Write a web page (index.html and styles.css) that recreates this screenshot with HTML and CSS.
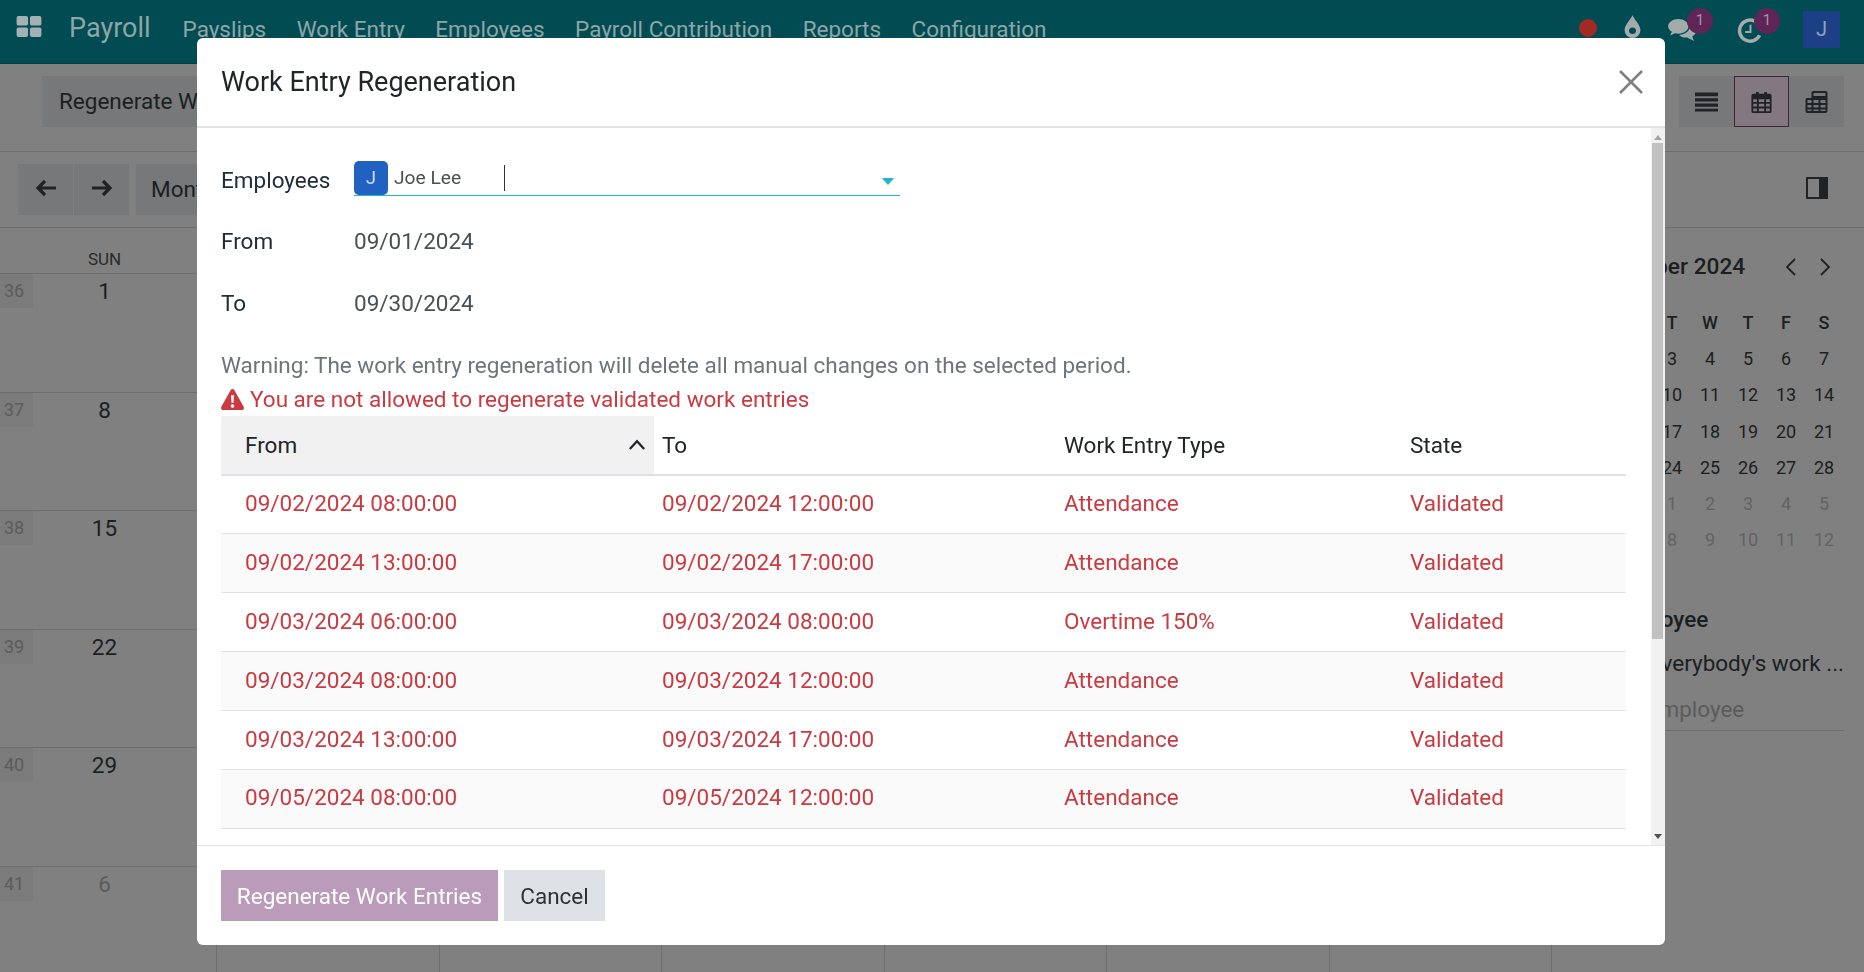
FILE: index.html
```html
<!DOCTYPE html>
<html lang="en">
<head>
  <meta charset="UTF-8">
  <title>Work Entry Regeneration</title>
  <link rel="stylesheet" href="styles.css">
</head>
<body>
  <header class="navbar">
    <svg class="apps-icon" viewBox="0 0 26 22"><rect width="12" height="10" rx="2"/><rect x="14" width="12" height="10" rx="2"/><rect y="12" width="12" height="10" rx="2"/><rect x="14" y="12" width="12" height="10" rx="2"/></svg>
    <span class="brand">Payroll</span>
    <nav class="menu">
      <a>Payslips</a>
      <a>Work Entry</a>
      <a>Employees</a>
      <a>Payroll Contribution</a>
      <a>Reports</a>
      <a>Configuration</a>
    </nav>
    <div class="systray">
      <span class="red-dot"></span>
      <svg class="tray-drop" viewBox="0 0 18 26"><path fill-rule="evenodd" d="M9 0c1 4 9 11 9 17a9 9 0 0 1-18 0C0 11 8 4 9 0zM9 14a4 4 0 0 0-4 4c0 2 2 3.500 4 3.500s4-1.500 4-3.500a4 4 0 0 0-4-4z"/></svg>
      <span class="tray-item">
        <svg class="tray-chat" viewBox="0 0 30 26"><path d="M11 1C5 1 0 4.500 0 9c0 2.500 1.500 4.500 4 6l-2 4 5.500-2.500c1.200.3 2.300.5 3.500.5 6 0 11-3.500 11-8s-5-8-11-8z"/><path d="M24 8.500c0 5-5.200 9.500-12 9.800 1.800 2 5 3.200 8.500 2.700L28 25l-2-5c2.500-1.300 4-3.300 4-5.500 0-2.600-2.300-4.800-6-6z"/></svg>
        <span class="badge">1</span>
      </span>
      <span class="tray-item tray-item-clock">
        <svg class="tray-clock" viewBox="0 0 28 26"><path d="M19 3.200A11 11 0 1 0 24 18" fill="none" stroke-width="3.600"/><path d="M14.500 7v7.500H9" fill="none" stroke-width="2"/></svg>
        <span class="badge">1</span>
      </span>
      <span class="avatar">J</span>
    </div>
  </header>

  <section class="control-panel">
    <div class="panel-row">
      <button class="btn-gray btn-regen">Regenerate Work Entries</button>
      <div class="view-switch">
        <span class="view-btn">
          <svg viewBox="0 0 24 20"><path d="M0 0h24v4H0zM0 6h24v3.500H0zM0 11.500h24V15H0zM0 17h24v3H0z"/></svg>
        </span>
        <span class="view-btn view-btn-active">
          <svg viewBox="0 0 22 24"><path fill-rule="evenodd" d="M2 3h3V1h3v2h6V1h3v2h3a2 2 0 0 1 2 2v17a2 2 0 0 1-2 2H2a2 2 0 0 1-2-2V5a2 2 0 0 1 2-2zM2 9v3h4V9zm6 0v3h6V9zm8 0v3h4V9zM2 14v3h4v-3zm6 0v3h6v-3zm8 0v3h4v-3zM2 19v3h4v-3zm6 0v3h6v-3zm8 0v3h4v-3z"/></svg>
        </span>
        <span class="view-btn">
          <svg viewBox="0 0 22 22"><path fill-rule="evenodd" d="M8 0h12a2 2 0 0 1 2 2v18a2 2 0 0 1-2 2H2a2 2 0 0 1-2-2V9a2 2 0 0 1 2-2h4V2a2 2 0 0 1 2-2zm0 2v3h12V2zM2 9v3h4V9zm6 0v3h5V9zm7 0v3h5V9zM2 14v2.500h4V14zm6 0v2.500h5V14zm7 0v2.500h5V14zM2 18.500V20h4v-1.500zm6 0V20h5v-1.500zm7 0V20h5v-1.500z"/></svg>
        </span>
      </div>
    </div>
    <div class="panel-row panel-row-second">
      <div class="nav-buttons">
        <button class="btn-gray btn-arrow">
          <svg viewBox="0 0 20 18"><path d="M9 2L2 9l7 7M2 9h18" fill="none" stroke-width="3.200"/></svg>
        </button>
        <button class="btn-gray btn-arrow">
          <svg viewBox="0 0 20 18"><path d="M11 2l7 7-7 7M18 9H0" fill="none" stroke-width="3.200"/></svg>
        </button>
        <button class="btn-gray btn-month">Month</button>
      </div>
      <svg class="side-toggle" viewBox="0 0 22 22"><path fill-rule="evenodd" d="M0 0h22v22H0zM2 2v18h11V2z"/></svg>
    </div>
  </section>

  <main class="content">
    <div class="calendar">
      <div class="cal-head">SUN</div><div></div><div></div><div></div><div></div><div></div><div></div>

      <div class="cal-day"><span class="week-no">36</span>1</div><div class="cal-cell"></div><div class="cal-cell"></div><div class="cal-cell"></div><div class="cal-cell"></div><div class="cal-cell"></div><div class="cal-cell"></div>
      <div class="cal-day"><span class="week-no">37</span>8</div><div class="cal-cell"></div><div class="cal-cell"></div><div class="cal-cell"></div><div class="cal-cell"></div><div class="cal-cell"></div><div class="cal-cell"></div>
      <div class="cal-day"><span class="week-no">38</span>15</div><div class="cal-cell"></div><div class="cal-cell"></div><div class="cal-cell"></div><div class="cal-cell"></div><div class="cal-cell"></div><div class="cal-cell"></div>
      <div class="cal-day"><span class="week-no">39</span>22</div><div class="cal-cell"></div><div class="cal-cell"></div><div class="cal-cell"></div><div class="cal-cell"></div><div class="cal-cell"></div><div class="cal-cell"></div>
      <div class="cal-day"><span class="week-no">40</span>29</div><div class="cal-cell"></div><div class="cal-cell"></div><div class="cal-cell"></div><div class="cal-cell"></div><div class="cal-cell"></div><div class="cal-cell"></div>
      <div class="cal-day cal-day-muted"><span class="week-no">41</span>6</div><div class="cal-cell"></div><div class="cal-cell"></div><div class="cal-cell"></div><div class="cal-cell"></div><div class="cal-cell"></div><div class="cal-cell"></div>
    </div>

    <aside class="sidepanel">
      <div class="mini-title">
        <span>September 2024</span>
        <svg class="mini-arrow" viewBox="0 0 12 20"><path d="M10 2L2 10l8 8" fill="none" stroke-width="1.800"/></svg>
        <svg class="mini-arrow" viewBox="0 0 12 20"><path d="M2 2l8 8-8 8" fill="none" stroke-width="1.800"/></svg>
      </div>
      <div class="mini-grid">
        <b>S</b><b>M</b><b>T</b><b>W</b><b>T</b><b>F</b><b>S</b>
        <span>1</span><span>2</span><span>3</span><span>4</span><span>5</span><span>6</span><span>7</span>
        <span>8</span><span>9</span><span>10</span><span>11</span><span>12</span><span>13</span><span>14</span>
        <span>15</span><span>16</span><span>17</span><span>18</span><span>19</span><span>20</span><span>21</span>
        <span>22</span><span>23</span><span>24</span><span>25</span><span>26</span><span>27</span><span>28</span>
        <i>29</i><i>30</i><i>1</i><i>2</i><i>3</i><i>4</i><i>5</i>
        <i>6</i><i>7</i><i>8</i><i>9</i><i>10</i><i>11</i><i>12</i>
      </div>
      <div class="side-heading">Employee</div>
      <div class="side-everybody">Everybody's work ...</div>
      <div class="side-input">Add Employee</div>
    </aside>
  </main>

  <div class="modal">
    <div class="modal-header">
      <h4>Work Entry Regeneration</h4>
      <svg class="modal-close" viewBox="0 0 24 24"><path d="M1 1l22 22M23 1L1 23" fill="none" stroke-width="2.600"/></svg>
    </div>

    <div class="modal-body">
      <div class="modal-scroll">
        <div class="form-row form-row-employee">
          <label>Employees</label>
          <div class="many2many">
            <span class="tag-avatar">J</span>
            <span class="tag-name">Joe Lee</span>
            <span class="caret-line"></span>
            <span class="dropdown-arrow"></span>
          </div>
        </div>
        <div class="form-row">
          <label>From</label>
          <span class="form-value">09/01/2024</span>
        </div>
        <div class="form-row">
          <label>To</label>
          <span class="form-value">09/30/2024</span>
        </div>
        <div class="warning-text">Warning: The work entry regeneration will delete all manual changes on the selected period.</div>
        <div class="error-text">
          <svg viewBox="0 0 24 22"><path fill-rule="evenodd" d="M12 0c.8 0 1.500.4 1.900 1.100l9.800 17.600c.8 1.500-.2 3.300-1.900 3.300H2.200c-1.700 0-2.700-1.800-1.900-3.300L10.100 1.100C10.500.4 11.200 0 12 0zM10.500 6.500l.4 8h2.200l.4-8zM12 16a1.900 1.900 0 1 0 0 3.800 1.900 1.900 0 0 0 0-3.800z"/></svg>
          You are not allowed to regenerate validated work entries
        </div>

        <table class="entries">
          <thead>
            <tr>
              <th class="col-from col-sorted">From<svg class="sort-icon" viewBox="0 0 16 10"><path d="M1.500 9L8 2l6.500 7" fill="none" stroke-width="2"/></svg></th>
              <th class="col-to">To</th>
              <th class="col-type">Work Entry Type</th>
              <th class="col-state">State</th>
            </tr>
          </thead>
          <tbody>
            <tr><td class="col-from">09/02/2024 08:00:00</td><td>09/02/2024 12:00:00</td><td>Attendance</td><td>Validated</td></tr>
            <tr><td class="col-from">09/02/2024 13:00:00</td><td>09/02/2024 17:00:00</td><td>Attendance</td><td>Validated</td></tr>
            <tr><td class="col-from">09/03/2024 06:00:00</td><td>09/03/2024 08:00:00</td><td>Overtime 150%</td><td>Validated</td></tr>
            <tr><td class="col-from">09/03/2024 08:00:00</td><td>09/03/2024 12:00:00</td><td>Attendance</td><td>Validated</td></tr>
            <tr><td class="col-from">09/03/2024 13:00:00</td><td>09/03/2024 17:00:00</td><td>Attendance</td><td>Validated</td></tr>
            <tr><td class="col-from">09/05/2024 08:00:00</td><td>09/05/2024 12:00:00</td><td>Attendance</td><td>Validated</td></tr>
          </tbody>
        </table>
      </div>

      <div class="scrollbar">
        <span class="scroll-up"></span>
        <div class="scroll-track"><div class="scroll-thumb"></div></div>
        <span class="scroll-down"></span>
      </div>
    </div>

    <div class="modal-footer">
      <button class="btn-primary">Regenerate Work Entries</button>
      <button class="btn-cancel">Cancel</button>
    </div>
  </div>
</body>
</html>
```

FILE: styles.css
```css
* {
  box-sizing: border-box;
}
body {
  margin: 0;
  height: 972px;
  overflow: hidden;
  font-family: Roboto, sans-serif;
  font-size: 22.5px;
  background-color: #808080;
  color: #1b1f22;
}
button {
  font-family: inherit;
  font-size: 22.5px;
  border: none;
  padding: 0;
}

/* top navbar */
.navbar {
  display: flex;
  align-items: flex-start;
  height: 64px;
  padding-left: 16px;
  background-color: #014c52;
  border-bottom: 1px solid #013e43;
  color: #8ea5a7;
}
.apps-icon {
  width: 26px;
  height: 21px;
  margin-top: 16px;
  fill: #a3b1b2;
}
.brand {
  margin-left: 27px;
  margin-top: 12px;
  font-size: 27px;
}
.menu {
  display: flex;
  margin-left: 32px;
  margin-top: 16px;
  gap: 30.5px;
}
.systray {
  display: flex;
  align-items: flex-start;
  margin-left: auto;
  height: 64px;
  padding-right: 24px;
}
.red-dot {
  width: 18px;
  height: 18px;
  margin-top: 19px;
  border-radius: 50%;
  background-color: #a32a22;
}
.tray-drop {
  width: 19px;
  height: 23px;
  margin-left: 26px;
  margin-top: 15px;
  fill: #a3abab;
}
.tray-item {
  position: relative;
  display: flex;
  margin-left: 25px;
  margin-top: 18px;
}
.tray-item-clock {
  margin-left: 38px;
}
.tray-chat {
  width: 30px;
  height: 24px;
  fill: #a3abab;
}
.tray-clock {
  width: 30px;
  height: 25px;
  stroke: #a3abab;
}
.badge {
  position: absolute;
  top: -10px;
  left: 20px;
  width: 26px;
  height: 26px;
  border-radius: 50%;
  background-color: #5f2557;
  color: #a892a6;
  font-size: 15px;
  line-height: 24px;
  text-align: center;
}
.tray-item-clock .badge {
  left: 19px;
}
.avatar {
  width: 37px;
  height: 37px;
  margin-left: 38px;
  margin-top: 11px;
  background-color: #1c3f86;
  color: #8fa0c0;
  font-size: 20px;
  line-height: 37px;
  text-align: center;
}

/* control panel */
.control-panel {
  background-color: #808080;
}
.panel-row {
  display: flex;
  justify-content: space-between;
  align-items: flex-start;
  height: 88px;
  padding: 12px 20px 0 42px;
  border-bottom: 1px solid #6e6e6e;
}
.panel-row-second {
  height: 76px;
  padding: 12px 36px 0 18px;
}
.btn-gray {
  height: 51px;
  padding-bottom: 2px;
  background-color: #76787a;
  color: #1b1f22;
}
.btn-regen {
  padding-left: 17px;
  padding-right: 17px;
}
.view-switch {
  display: flex;
}
.view-btn {
  display: flex;
  align-items: center;
  justify-content: center;
  width: 55px;
  height: 51px;
  background-color: #76787a;
  border: 1px solid #76787a;
}
.view-btn svg {
  width: 23px;
  height: 22px;
  fill: #202326;
}
.view-btn-active {
  background-color: #83787f;
  border-color: #3d2438;
}
.nav-buttons {
  display: flex;
  gap: 1px;
}
.btn-arrow {
  width: 55px;
}
.btn-arrow svg {
  width: 20px;
  height: 18px;
  stroke: #202326;
}
.btn-month {
  margin-left: 6px;
  padding-left: 15px;
  width: 110px;
  text-align: left;
}
.side-toggle {
  width: 22px;
  height: 22px;
  margin-top: 13px;
  fill: #202326;
}

/* calendar behind the dialog */
.content {
  display: flex;
}
.calendar {
  display: grid;
  grid-template-columns: 217px repeat(6, 222.5px);
  grid-template-rows: 45px repeat(6, 118.6px);
  width: 1552px;
}
.calendar > div {
  border-right: 1px solid #6e6e6e;
}
.cal-head {
  padding-top: 21px;
  padding-right: 7px;
  font-size: 17px;
  text-align: center;
  color: #2b2b2b;
}
.cal-day,
.cal-cell {
  border-top: 1px solid #6e6e6e;
}
.cal-day {
  position: relative;
  padding-top: 4px;
  padding-right: 7px;
  text-align: center;
}
.cal-day-muted {
  color: #5c5c5c;
}
.week-no {
  position: absolute;
  left: 0;
  top: 0;
  width: 33px;
  height: 34px;
  padding-right: 5px;
  background-color: #7b7b7b;
  color: #5c5c5c;
  font-size: 18px;
  line-height: 34px;
  text-align: center;
}
.sidepanel {
  width: 312px;
  padding: 0 20px 0 25px;
}
.mini-title {
  display: flex;
  align-items: center;
  gap: 22px;
  margin-top: 25px;
  font-size: 22.700px;
  font-weight: 500;
  white-space: nowrap;
}
.mini-title span {
  margin-right: 18px;
}
.mini-arrow {
  width: 12px;
  height: 20px;
  flex-shrink: 0;
  stroke: #202326;
}
.mini-grid {
  display: grid;
  grid-template-columns: repeat(7, 38px);
  grid-auto-rows: 36.300px;
  align-items: center;
  margin-top: 24px;
  font-size: 18px;
  text-align: center;
}
.mini-grid b {
  font-weight: 500;
}
.mini-grid i {
  font-style: normal;
  color: #636363;
}
.side-heading {
  margin-top: 48px;
  margin-left: 33px;
  font-weight: 500;
}
.side-everybody {
  margin-top: 18px;
  padding-left: 72px;
  white-space: nowrap;
}
.side-input {
  margin-top: 20px;
  padding-bottom: 8px;
  padding-left: 24px;
  border-bottom: 1px solid #6e6e6e;
  color: #5c5c5c;
}

/* dialog */
.modal {
  position: fixed;
  left: 197px;
  top: 38px;
  width: 1468px;
  height: 907px;
  display: flex;
  flex-direction: column;
  background-color: white;
  border-radius: 6px;
  overflow: hidden;
}
.modal-header {
  display: flex;
  justify-content: space-between;
  align-items: center;
  height: 90px;
  padding: 0 22px 0 24px;
  border-bottom: 2px solid #e3e3e3;
}
.modal-header h4 {
  margin: 0;
  font-size: 27px;
  font-weight: 400;
  color: #212529;
}
.modal-close {
  width: 24px;
  height: 24px;
  stroke: #808080;
}
.modal-body {
  display: flex;
  flex: 1;
  min-height: 0;
}
.modal-scroll {
  flex: 1;
  min-width: 0;
  padding: 33px 25px 0 24px;
  overflow: hidden;
}
.form-row {
  display: flex;
  align-items: center;
  height: 34px;
  margin-top: 28px;
}
.form-row label {
  width: 133px;
  color: #212d3a;
}
.form-row-employee {
  margin-top: 0;
  height: 35px;
}
.form-row-employee label {
  padding-top: 2px;
}
.many2many {
  position: relative;
  display: flex;
  align-items: flex-start;
  width: 546px;
  height: 35px;
  border-bottom: 1px solid #1fb5c4;
}
.tag-avatar {
  width: 34px;
  height: 34px;
  border-radius: 5px;
  background-color: #2061c2;
  color: #cfe0f5;
  font-size: 18px;
  line-height: 34px;
  text-align: center;
}
.tag-name {
  margin-left: 6px;
  font-size: 19.200px;
  line-height: 34px;
  color: #4a4f54;
}
.caret-line {
  width: 1px;
  height: 26px;
  margin-left: 43px;
  margin-top: 4px;
  background-color: #333;
}
.dropdown-arrow {
  position: absolute;
  right: 6px;
  top: 17px;
  border-left: 6px solid transparent;
  border-right: 6px solid transparent;
  border-top: 7px solid #1fb5c4;
}
.form-value {
  color: #495057;
}
.warning-text {
  margin-top: 28px;
  line-height: 34px;
  color: #6c757d;
}
.error-text {
  display: flex;
  align-items: center;
  gap: 6px;
  line-height: 34px;
  color: #ca3b41;
}
.error-text svg {
  width: 23px;
  height: 21px;
  fill: #ca3b41;
}
.entries {
  width: 1405px;
  border-collapse: collapse;
  table-layout: fixed;
}
.entries th {
  position: relative;
  height: 59px;
  padding: 0 8px;
  font-weight: 400;
  text-align: left;
  color: #212529;
  border-bottom: 2px solid #dee2e6;
}
.entries td {
  height: 58.900px;
  padding: 0 8px 3px;
  color: #ca3b41;
  border-bottom: 1px solid #dee2e6;
}
.entries tbody tr:nth-child(even) {
  background-color: #fafafa;
}
.entries .col-from {
  width: 433px;
  padding-left: 24px;
}
.entries .col-to {
  width: 402px;
}
.entries .col-type {
  width: 346px;
}
.entries .col-sorted {
  background-color: #f1f1f1;
}
.sort-icon {
  position: absolute;
  right: 8px;
  top: 23px;
  width: 18px;
  height: 11px;
  stroke: #212529;
}

/* fake classic scrollbar */
.scrollbar {
  display: flex;
  flex-direction: column;
  align-items: center;
  width: 14px;
  background-color: #f1f1f1;
}
.scroll-up,
.scroll-down {
  width: 0;
  height: 0;
  margin: 7px 0 3px;
  border-left: 4px solid transparent;
  border-right: 4px solid transparent;
}
.scroll-up {
  border-bottom: 5px solid #a3a3a3;
}
.scroll-down {
  margin: 3px 0 6px;
  border-top: 5px solid #505050;
}
.scroll-track {
  flex: 1;
  width: 100%;
  padding: 0 2px 0 1px;
}
.scroll-thumb {
  height: 496px;
  background-color: #c1c1c1;
}

.modal-footer {
  display: flex;
  gap: 6px;
  height: 100px;
  padding: 24px 24px 0;
  border-top: 1px solid #e3e3e3;
}
.btn-primary {
  width: 277px;
  height: 51px;
  background-color: #ba9bba;
  color: white;
}
.btn-cancel {
  width: 101px;
  height: 51px;
  background-color: #dee2e6;
  color: #2c3238;
}
```
